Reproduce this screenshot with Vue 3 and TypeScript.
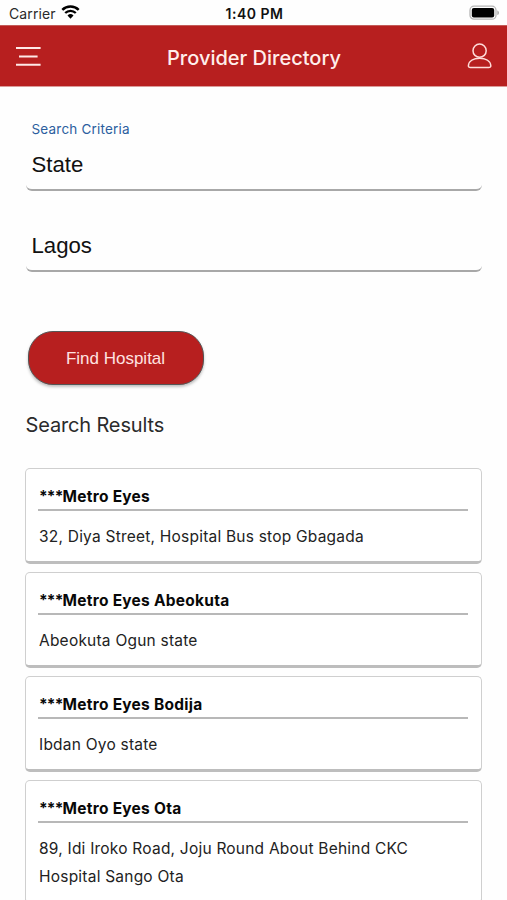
<script setup lang="ts">
import { ref } from 'vue'

interface Provider {
  mark: string
  name: string
  address: string
}

const criteria = ref('State')
const value = ref('Lagos')

const providers: Provider[] = [
  { mark: '***', name: 'Metro Eyes', address: '32, Diya Street, Hospital Bus stop Gbagada' },
  { mark: '***', name: 'Metro Eyes Abeokuta', address: 'Abeokuta Ogun state' },
  { mark: '***', name: 'Metro Eyes Bodija', address: 'Ibdan Oyo state' },
  { mark: '***', name: 'Metro Eyes Ota', address: '89, Idi Iroko Road, Joju Round About Behind CKC Hospital Sango Ota' },
]
</script>

<template>
  <div class="screen">
    <div class="status">
      <div class="carrier">
        <span>Carrier</span>
        <svg class="wifi" width="19" height="14" viewBox="0 0 19 14">
          <path d="M1.3 4.9a11.7 11.7 0 0 1 16.4 0" fill="none" stroke="#000" stroke-width="2.5" />
          <path d="M4.2 8a7.5 7.5 0 0 1 10.6 0" fill="none" stroke="#000" stroke-width="2.3" />
          <path d="M9.5 13.7 6.5 10.5a4.3 4.3 0 0 1 6 0z" fill="#000" />
        </svg>
      </div>
      <span class="time">1:40 PM</span>
      <svg class="battery" width="31" height="16" viewBox="0 0 31 16">
        <rect x="1" y="1.2" width="26" height="13" rx="4" fill="#fff" stroke="#b5b5b5" stroke-width="1.3" />
        <rect x="2.8" y="3" width="22.4" height="9.4" rx="2" fill="#000" />
        <path d="M28.3 5.5c2.2.7 2.2 3.9 0 4.6z" fill="#aaa" />
      </svg>
    </div>

    <header class="bar">
      <button class="icon" aria-label="Menu">
        <svg width="26" height="22" viewBox="0 0 26 22" fill="none" stroke="#ffe9e7" stroke-width="2">
          <path d="M1 3h24.600M4 11.400h18.600M1 19.800h24.600" />
        </svg>
      </button>
      <h1>Provider Directory</h1>
      <button class="icon" aria-label="Profile">
        <svg width="26" height="28" viewBox="0 0 26 28" fill="none" stroke="#ffdcd9" stroke-width="1.5">
          <circle cx="12.600" cy="8.700" r="6.600" />
          <path d="M1.4 23.5c.5-4.700 5.400-7.200 11.200-7.200s10.700 2.500 11.200 7.200c.1 1.300-.7 2-2 2H3.400c-1.300 0-2.100-.7-2-2z" />
        </svg>
      </button>
    </header>

    <main>
      <div class="field">
        <label>Search Criteria</label>
        <div class="value">{{ criteria }}</div>
      </div>
      <div class="field second">
        <div class="value">{{ value }}</div>
      </div>

      <button class="find">Find Hospital</button>

      <h2>Search Results</h2>

      <div class="results">
        <article v-for="p in providers" :key="p.name" class="card">
          <h3><span class="mark">{{ p.mark }}</span>{{ p.name }}</h3>
          <p>{{ p.address }}</p>
        </article>
      </div>
    </main>
  </div>
</template>

<style>
body {
  background: #fefefe;
}
</style>

<style scoped>
.screen {
  box-sizing: border-box;
  width: 100%;
  height: 900px;
  overflow: hidden;
  background: #fefefe;
  color: #111;
  font-family: Inter, "Liberation Sans", sans-serif;
}
.status {
  display: grid;
  grid-template-columns: 1fr auto 1fr;
  align-items: center;
  height: 25px;
  padding: 0 7px 0 9px;
  font-size: 14px;
}
.carrier {
  display: flex;
  align-items: center;
  gap: 5px;
  padding-top: 2px;
  color: #2a2a2a;
  letter-spacing: 0.1px;
}
.wifi {
  margin-top: -3px;
}
.time {
  padding-top: 2px;
  font-weight: 600;
  letter-spacing: 0.5px;
}
.battery {
  justify-self: end;
  margin-top: 1px;
}
.bar {
  box-sizing: border-box;
  display: flex;
  align-items: center;
  justify-content: space-between;
  height: 62px;
  padding: 0 14px 0 15px;
  background: #b71f1f;
  border-top: 1px solid #c35c59;
  border-bottom: 1px solid #db9b99;
}
.icon {
  display: flex;
  padding: 0;
  border: 0;
  background: none;
}
h1 {
  margin: 3px 0 0;
  color: #ffeeec;
  font-size: 20px;
  font-weight: 500;
  line-height: 26px;
}
main {
  display: flex;
  flex-direction: column;
  align-items: stretch;
  padding: 33px 25px 0 26px;
}
.field {
  box-sizing: border-box;
  height: 71px;
  padding-left: 5.5px;
  border-bottom: 2px solid #a8a8a8;
  border-radius: 0 0 6px 6px;
}
.second {
  height: 41px;
  margin-top: 40px;
}
.second .value {
  padding-top: 1px;
}
label {
  display: block;
  height: 31px;
  color: #2c5f9e;
  font-size: 13.5px;
  letter-spacing: 0.2px;
  line-height: 19px;
}
.value {
  font-family: "Liberation Sans", Arial, sans-serif;
  font-size: 22.2px;
  line-height: 28px;
}
.find {
  box-sizing: border-box;
  align-self: flex-start;
  width: 176px;
  height: 54px;
  margin: 59px 0 0 1.5px;
  padding: 1px 0 0;
  border: 1px solid #555;
  border-radius: 25px;
  background: #b71f1f;
  box-shadow: 0 2px 3px rgba(0, 0, 0, 0.25);
  color: #ffe3e1;
  font-family: "Liberation Sans", Arial, sans-serif;
  font-size: 17px;
}
h2 {
  margin: 27px 0 30px -0.5px;
  color: #2b2b2b;
  font-size: 20px;
  font-weight: 400;
  letter-spacing: -0.15px;
  line-height: 26px;
}
.results {
  display: flex;
  flex-direction: column;
  gap: 8px;
  margin-left: -1px;
}
.card {
  box-sizing: border-box;
  min-height: 96px;
  padding: 15px 13px 9px 12px;
  border: 1px solid #cfcfcf;
  border-bottom: 3px solid #bdbdbd;
  border-radius: 5px;
  background: #fff;
}
h3 {
  margin: 0;
  height: 25px;
  border-bottom: 2px solid #b8b8b8;
  color: #080808;
  font-size: 15.5px;
  font-weight: 700;
  letter-spacing: 0.26px;
  line-height: 26px;
  text-indent: 1px;
}
.mark {
  letter-spacing: -0.8px;
}
p {
  margin: 12px 0 1px 1px;
  color: #222;
  font-size: 15.5px;
  letter-spacing: 0.22px;
  line-height: 28px;
}
</style>
